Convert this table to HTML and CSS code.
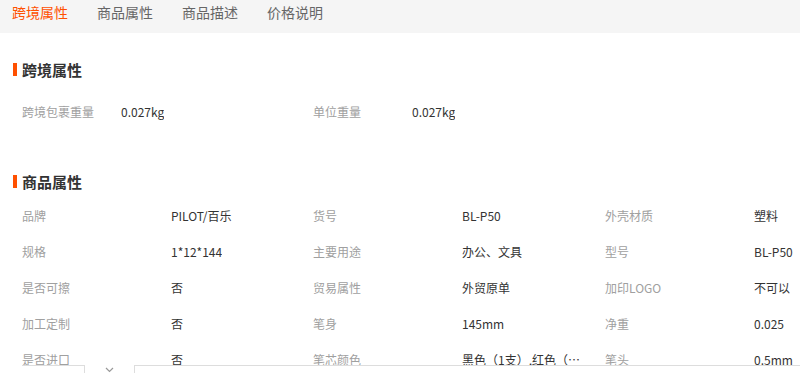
FILE: index.html
```html
<!DOCTYPE html>
<html lang="zh-CN">
<head>
<meta charset="utf-8">
<title>商品属性</title>
<link rel="stylesheet" href="styles.css">
</head>
<body>
<nav class="tabs">
  <span class="tab active">跨境属性</span>
  <span class="tab">商品属性</span>
  <span class="tab">商品描述</span>
  <span class="tab">价格说明</span>
</nav>

<section class="sec sec-cross">
  <h2 class="sec-title">跨境属性</h2>
  <div class="grid grid-cross">
    <div class="cell"><span class="lbl">跨境包裹重量</span><span class="val">0.027kg</span></div>
    <div class="cell"><span class="lbl">单位重量</span><span class="val">0.027kg</span></div>
  </div>
</section>

<section class="sec sec-goods">
  <h2 class="sec-title">商品属性</h2>
  <div class="grid grid-goods">
    <div class="cell"><span class="lbl">品牌</span><span class="val">PILOT/百乐</span></div>
    <div class="cell"><span class="lbl">货号</span><span class="val">BL-P50</span></div>
    <div class="cell"><span class="lbl">外壳材质</span><span class="val">塑料</span></div>
    <div class="cell"><span class="lbl">规格</span><span class="val">1*12*144</span></div>
    <div class="cell"><span class="lbl">主要用途</span><span class="val">办公、文具</span></div>
    <div class="cell"><span class="lbl">型号</span><span class="val">BL-P50</span></div>
    <div class="cell"><span class="lbl">是否可擦</span><span class="val">否</span></div>
    <div class="cell"><span class="lbl">贸易属性</span><span class="val">外贸原单</span></div>
    <div class="cell"><span class="lbl">加印LOGO</span><span class="val">不可以</span></div>
    <div class="cell"><span class="lbl">加工定制</span><span class="val">否</span></div>
    <div class="cell"><span class="lbl">笔身</span><span class="val">145mm</span></div>
    <div class="cell"><span class="lbl">净重</span><span class="val">0.025</span></div>
    <div class="cell"><span class="lbl">是否进口</span><span class="val">否</span></div>
    <div class="cell"><span class="lbl">笔芯颜色</span><span class="val">黑色（1支）,红色（1支）,蓝色（1支）</span></div>
    <div class="cell"><span class="lbl">笔头</span><span class="val">0.5mm</span></div>
  </div>
</section>

<div class="bottom-bar">
  <div class="bb-left"></div>
  <div class="bb-arrow"><svg width="9" height="6" viewBox="0 0 9 6"><path d="M1 1 L4.5 4.5 L8 1" fill="none" stroke="#999" stroke-width="1.2"/></svg></div>
  <div class="bb-right"></div>
</div>
</body>
</html>
```

FILE: styles.css
```css
* { box-sizing: border-box; }
html, body { margin: 0; padding: 0; }
body {
  background: #fff;
  font-family: "Noto Sans CJK SC", "Microsoft YaHei", sans-serif;
  color: #333;
  overflow: hidden;
  height: 373px;
  position: relative;
}
.tabs {
  display: flex;
  height: 33px;
  background: #f5f5f5;
  padding-left: 12px;
  gap: 29px;
  align-items: flex-start;
}
.tab {
  font-size: 14px;
  line-height: 24px;
  color: #666;
}
.tab.active { color: #ff5000; }

.sec-title {
  margin: 0;
  font-size: 15px;
  font-weight: bold;
  line-height: 20px;
  color: #333;
  padding-left: 22px;
  position: relative;
}
.sec-title::before {
  content: "";
  position: absolute;
  left: 13px;
  top: 3px;
  width: 4px;
  height: 13px;
  background: #ff5000;
}
.sec-cross { margin-top: 27px; }
.sec-cross .grid { margin-top: 13px; }
.sec-goods { margin-top: 43px; }
.sec-goods .grid { margin-top: 5px; }

.grid {
  display: grid;
  padding-left: 22px;
  grid-template-columns: 291px 292px 1fr;
  grid-auto-rows: 36px;
}
.grid-cross { grid-template-columns: 291px 1fr; }
.cell {
  display: flex;
  align-items: center;
  font-size: 12px;
  white-space: nowrap;
}
.lbl { color: #a0a0a0; flex: none; }
.grid-cross .lbl { width: 99px; }
.grid-goods .lbl { width: 149px; }
.val {
  color: #333;
  max-width: 122px;
  overflow: hidden;
  text-overflow: ellipsis;
}

.bottom-bar {
  position: absolute;
  left: 0;
  right: 0;
  top: 365px;
  height: 8px;
  background: #fff;
  display: flex;
  align-items: flex-start;
}
.bb-left {
  margin-left: 22px;
  width: 63px;
  height: 8px;
  border-top: 1px solid #ddd;
  border-right: 1px solid #ddd;
}
.bb-arrow {
  width: 49px;
  display: flex;
  justify-content: center;
  padding-top: 2px;
}
.bb-right {
  flex: 1;
  height: 8px;
  border-top: 1px solid #ddd;
  border-left: 1px solid #ddd;
}
```
